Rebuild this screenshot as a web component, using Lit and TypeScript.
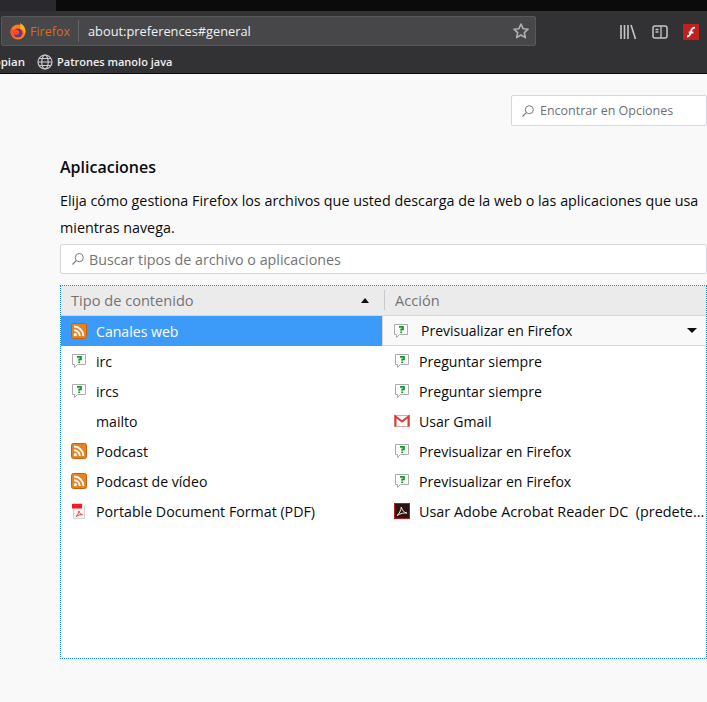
import { LitElement, html, css } from "lit";
import { customElement } from "lit/decorators.js";

const rss = html`<svg class="ic" viewBox="0 0 16 16"><rect x=".5" y=".5" width="15" height="15" rx="2" fill="#e8831f" stroke="#c4600f"/><circle cx="4.300" cy="11.700" r="1.600" fill="#fff"/><path d="M3 7.200a5.800 5.800 0 0 1 5.800 5.800M3 3.600A9.400 9.400 0 0 1 12.400 13" fill="none" stroke="#fff" stroke-width="2"/></svg>`;
const chat = html`<svg class="ic" viewBox="0 0 16 16"><path d="M1.500 1.500h13v10H6.500L3.500 14.500v-3h-2z" fill="#fcfcfc" stroke="#a9aeaa"/><path d="M6 3.800h4v2.600H8.200v1.400" fill="none" stroke="#12962a" stroke-width="1.700"/><rect x="7.300" y="8.500" width="1.800" height="1.600" fill="#12962a"/></svg>`;
const gmail = html`<svg class="ic" viewBox="0 0 16 16"><rect x=".5" y="2.500" width="15" height="11" fill="#fff" stroke="#e6a5a0"/><path d="M1.500 13.500V3.500l6.500 5 6.500-5v10" fill="none" stroke="#dc3b33" stroke-width="2"/></svg>`;
const acro = html`<svg class="ic" viewBox="0 0 16 16"><rect x=".5" y=".5" width="15" height="15" fill="#2b1512" stroke="#c2161c"/><path d="M3 12.500c2-1 4-5.500 4.300-8.500.7 3 2.500 5.500 5.700 6-3-.2-6 .2-10 2.500z" fill="none" stroke="#f1e6e4" stroke-width="1"/></svg>`;
const pdf = html`<svg class="ic" viewBox="0 0 16 16"><path d="M2.500.5h8l3 3v12h-11z" fill="#f4f4f4" stroke="#d5d5d5"/><rect x="1" y="1" width="10" height="4.500" fill="#ee1c24"/><path d="M5 13.500c1.500-.8 2.700-3.500 2.900-5.500.5 2 1.500 3.400 3.600 3.700-2.200-.1-4 .3-6.500 1.800z" fill="none" stroke="#e33" stroke-width=".9"/></svg>`;
const loupe = html`<svg class="loupe" viewBox="0 0 14 14"><circle cx="8.300" cy="5.700" r="4" fill="none" stroke="#7a7a80" stroke-width="1"/><path d="M5.300 8.700 1.500 12.500" stroke="#7a7a80" stroke-width="1.200"/></svg>`;

const rows = [
  { i: chat, t: "irc", ai: chat, a: "Preguntar siempre" },
  { i: chat, t: "ircs", ai: chat, a: "Preguntar siempre" },
  { i: null, t: "mailto", ai: gmail, a: "Usar Gmail" },
  { i: rss, t: "Podcast", ai: chat, a: "Previsualizar en Firefox" },
  { i: rss, t: "Podcast de vídeo", ai: chat, a: "Previsualizar en Firefox" },
  { i: pdf, t: "Portable Document Format (PDF)", ai: acro, a: "Usar Adobe Acrobat Reader DC  (predete...", long: true },
];

@customElement("app-root")
export class AppRoot extends LitElement {
  static styles = css`
    :host { display: block; width: 707px; height: 702px; overflow: hidden; background: #f9f9fa; font-family: "Open Sans", sans-serif; color: #0c0c0d; }
    * { box-sizing: border-box; }
    .top { height: 11px; background: #0b0b0b; margin-left: 56px; }
    .topwrap { background: #2a2a2e; height: 11px; }
    .toolbar { height: 63px; background: #323234; border-bottom: 1px solid #0c0c0d; }
    .navrow { height: 39px; display: flex; align-items: flex-start; padding: 5px 0 0 1px; }
    .url { width: 535px; height: 30px; background: #474749; border: 1px solid #58585a; border-radius: 2px; display: flex; align-items: center; font-size: 12.800px; color: #f2f2f2; }
    .fx { width: 18px; height: 18px; margin-left: 7px; flex: none; }
    .brand { color: #d96a1c; margin-left: 3px; width: 48px; font-size: 12.500px; white-space: nowrap; }
    .sep { width: 1px; height: 22px; background: #66666a; margin-right: 9px; }
    .addr { flex: 1; white-space: nowrap; }
    .star { width: 18px; height: 18px; margin-right: 5px; }
    .tools { display: flex; align-items: center; gap: 15px; margin-left: 84px; margin-top: 1px; height: 30px; }
    .tools svg { display: block; }
    .bm { height: 23px; display: flex; align-items: center; font-size: 11px; font-weight: 600; color: #eee; white-space: nowrap; }
    .bm .cut { width: 25px; overflow: hidden; direction: rtl; flex: none; font-size: 11.500px; }
    .bm svg { width: 16px; height: 16px; margin: 0 4px 0 12px; flex: none; }
    .find-row { display: flex; justify-content: flex-end; padding-top: 21px; }
    .find { width: 196px; height: 31px; background: #fff; border: 1px solid #d7d7db; border-radius: 2px; display: flex; align-items: center; padding-left: 9px; font-size: 12.500px; color: #6f6f78; gap: 5px; }
    .loupe { width: 14px; height: 14px; flex: none; }
    .main { margin-left: 60px; width: 647px; }
    h2 { margin: 29px 0 0; font-size: 16px; font-weight: 600; line-height: 24px; }
    p { margin: 8px 0 0; font-size: 14.340px; line-height: 27px; height: 54px; width: 645px; }
    .search { height: 30px; margin-top: 3px; background: #fff; border: 1px solid #d7d7db; border-radius: 2px; display: flex; align-items: center; padding-left: 10px; gap: 4px; font-size: 14.280px; color: #737373; }
    .table { margin-top: 11px; height: 374px; background: #fff; outline: 1px dotted #0a84ff; outline-offset: -1px; padding: 1px; overflow: hidden; }
    .head { height: 30px; background: #ebebec; display: grid; grid-template-columns: 323px 1fr; align-items: center; font-size: 14.600px; color: #737373; border-bottom: 1px solid #d7d7db; padding-bottom: 1px; }
    .hc { display: flex; align-items: center; padding-left: 10px; justify-content: space-between; }
    .hc2 { border-left: 1px solid #c8c8cc; height: 20px; padding-left: 10px; line-height: 20px; }
    .caret { width: 0; height: 0; border: 4.500px solid transparent; border-top: 0; border-bottom: 5px solid #0c0c0d; margin-right: 15px; }
    .row { height: 30px; display: grid; grid-template-columns: 321px 1fr; font-size: 14.100px; }
    .cell { display: flex; align-items: center; min-width: 0; padding-left: 10px; gap: 9px; white-space: pre; overflow: hidden; }
    .cell.a { padding-left: 12px; gap: 9px; padding-right: 0; }
    .long { font-size: 14.230px; }
    .cell .adobe { font-size: 14.400px; }
    .ic { width: 16px; height: 16px; flex: none; }
    .blank { width: 16px; flex: none; }
    .sel { background: #3c9af8; color: #fff; }
    .drop { background: #f9f9fa; border-left: 1px solid #d7d7db; border-bottom: 1px solid #d7d7db; display: flex; align-items: center; padding-left: 10px; font-size: 14px; color: #0c0c0d; }
    .drop .lbl { margin-left: 12px; flex: 1; }
    .down { width: 0; height: 0; border: 5px solid transparent; border-bottom: 0; border-top: 5px solid #0c0c0d; margin-right: 9px; }
  `;

  render() {
    return html`
      <div class="topwrap"><div class="top"></div></div>
      <div class="toolbar">
        <div class="navrow">
          <div class="url">
            <svg class="fx" viewBox="0 0 18 18">
              <circle cx="9" cy="10" r="7.500" fill="#ff7a1a"/>
              <circle cx="9" cy="11" r="4.500" fill="#5b2a86" opacity=".85"/>
              <path d="M11 1c3 1.500 5.500 4.500 5.500 8 0 1-.2 2-.5 2.500-1-3-3-4-5-5 .5-2 .5-3.500 0-5.500z" fill="#ffb01f"/>
              <path d="M2 6c2 2.500 4 1.500 6 2 1 .2 2.500 1.500 2 3-.6 2-3.500 2.500-5 1-.5 2 2 4 4.500 3.500C7 17 2 15 1.600 10 1.500 8.500 1.600 7 2 6z" fill="#ff4f2e"/>
            </svg>
            <span class="brand">Firefox</span>
            <div class="sep"></div>
            <span class="addr">about:preferences#general</span>
            <svg class="star" viewBox="0 0 18 18"><path d="M9 2l2.100 4.700 5 .5-3.800 3.400 1.100 5L9 13l-4.400 2.600 1.100-5L1.900 7.200l5-.5z" fill="none" stroke="#b1b1b3" stroke-width="1.600" stroke-linejoin="round"/></svg>
          </div>
          <div class="tools">
            <svg width="17" height="16" viewBox="0 0 17 16"><path d="M1 1v14M4.500 1v14M8 1v14M11 1l4.500 14" stroke="#c6c6c8" stroke-width="1.600" fill="none"/></svg>
            <svg width="16" height="16" viewBox="0 0 16 16"><rect x="1" y="2" width="14" height="12" rx="2" fill="none" stroke="#c6c6c8" stroke-width="1.500"/><path d="M9 2v12M3.500 5.500h3M3.500 8h3" stroke="#c6c6c8" stroke-width="1.300"/></svg>
            <svg width="16" height="16" viewBox="0 0 16 16"><rect width="16" height="16" rx="1" fill="#c2201f"/><path d="M4 12.500c3 0 3.500-2.500 4-5s1.500-3.800 4-3.800M5.800 8.500h4.500" fill="none" stroke="#fff" stroke-width="1.800"/></svg>
          </div>
        </div>
        <div class="bm">
          <span class="cut">opian</span>
          <svg viewBox="0 0 16 16" fill="none" stroke="#c9c9cb" stroke-width="1.200"><circle cx="8" cy="8" r="7"/><ellipse cx="8" cy="8" rx="3.200" ry="7"/><path d="M1 8h14M2 4.500h12M2 11.500h12"/></svg>
          <span>Patrones manolo java</span>
        </div>
      </div>
      <div class="find-row">
        <div class="find">${loupe}<span>Encontrar en Opciones</span></div>
      </div>
      <div class="main">
        <h2>Aplicaciones</h2>
        <p>Elija cómo gestiona Firefox los archivos que usted descarga de la web o las aplicaciones que usa mientras navega.</p>
        <div class="search">${loupe}<span>Buscar tipos de archivo o aplicaciones</span></div>
        <div class="table">
          <div class="head">
            <div class="hc"><span>Tipo de contenido</span><i class="caret"></i></div>
            <div class="hc2">Acción</div>
          </div>
          <div class="row">
            <div class="cell sel">${rss}<span>Canales web</span></div>
            <div class="drop">${chat}<span class="lbl">Previsualizar en Firefox</span><i class="down"></i></div>
          </div>
          ${rows.map(r => html`
            <div class="row">
              <div class="cell ${r.long ? "long" : ""}">${r.i ?? html`<i class="blank"></i>`}<span>${r.t}</span></div>
              <div class="cell a">${r.ai}<span class="${r.long ? "adobe" : ""}">${r.a}</span></div>
            </div>`)}
        </div>
      </div>
    `;
  }
}
